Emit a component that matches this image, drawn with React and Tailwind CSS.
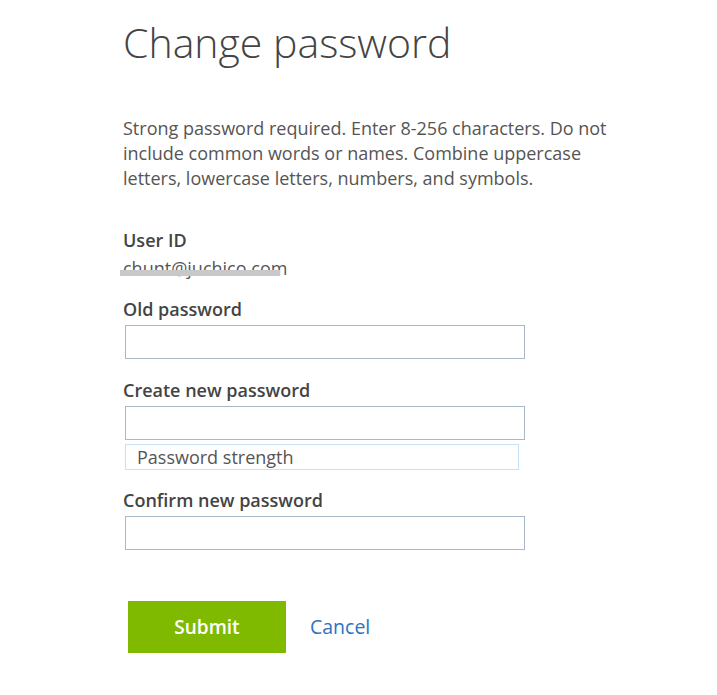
import { useState } from "react"

const Field = ({ label, id, className = "", children }) => (
    <div className={className}>
        <label htmlFor={id} className="block text-[18px] font-semibold leading-[24px] text-[#444]">{label}</label>
        <input id={id} type="password" className="mt-[4px] ml-[2px] block w-[400px] h-[34px] border border-[#a9b8c9] bg-white px-2 outline-none" />
        {children}
    </div>
)

export default function App() {
    const [submitted, setSubmitted] = useState(false)

    return (
        <div className="min-h-[695px] bg-white pl-[123px] pt-[16px] text-[#555]" style={{ fontFamily: '"Open Sans", "Liberation Sans", sans-serif' }}>
            <h1 className="text-[41px] font-light leading-[52px] text-[#444]">Change password</h1>

            <p className="mt-[48px] w-[495px] text-[18px] leading-[25px] text-[#555]">
                Strong password required. Enter 8-256 characters. Do not include common words or names. Combine uppercase letters, lowercase letters, numbers, and symbols.
            </p>

            <div className="mt-[37px]">
                <div className="text-[18px] font-semibold leading-[24px] text-[#444]">User ID</div>
                <div className="relative mt-[4px] inline-block text-[18px] leading-[24px] text-[#555]">
                    chunt@juchico.com
                    <span className="absolute left-[-3px] top-[14px] h-[6px] w-[160px] bg-[#c8c8c8]"></span>
                </div>
            </div>

            <div className="mt-[16px]">
                <Field label="Old password" id="old" />
                <Field label="Create new password" id="new" className="mt-[19px]">
                    <div className="mt-[4px] ml-[2px] w-[394px] h-[26px] border border-[#c9e1f5] pl-[11px] text-[18px] leading-[24px] text-[#555]">Password strength</div>
                </Field>
                <Field label="Confirm new password" id="confirm" className="mt-[18px]" />
            </div>

            <div className="mt-[51px] ml-[5px] flex items-center gap-[24px]">
                <button type="button" onClick={() => setSubmitted(!submitted)} className="w-[158px] h-[52px] bg-[#7fba00] text-[19px] font-semibold text-white">Submit</button>
                <button type="button" className="text-[19.5px] text-[#2e72c2]">Cancel</button>
            </div>
        </div>
    )
}
